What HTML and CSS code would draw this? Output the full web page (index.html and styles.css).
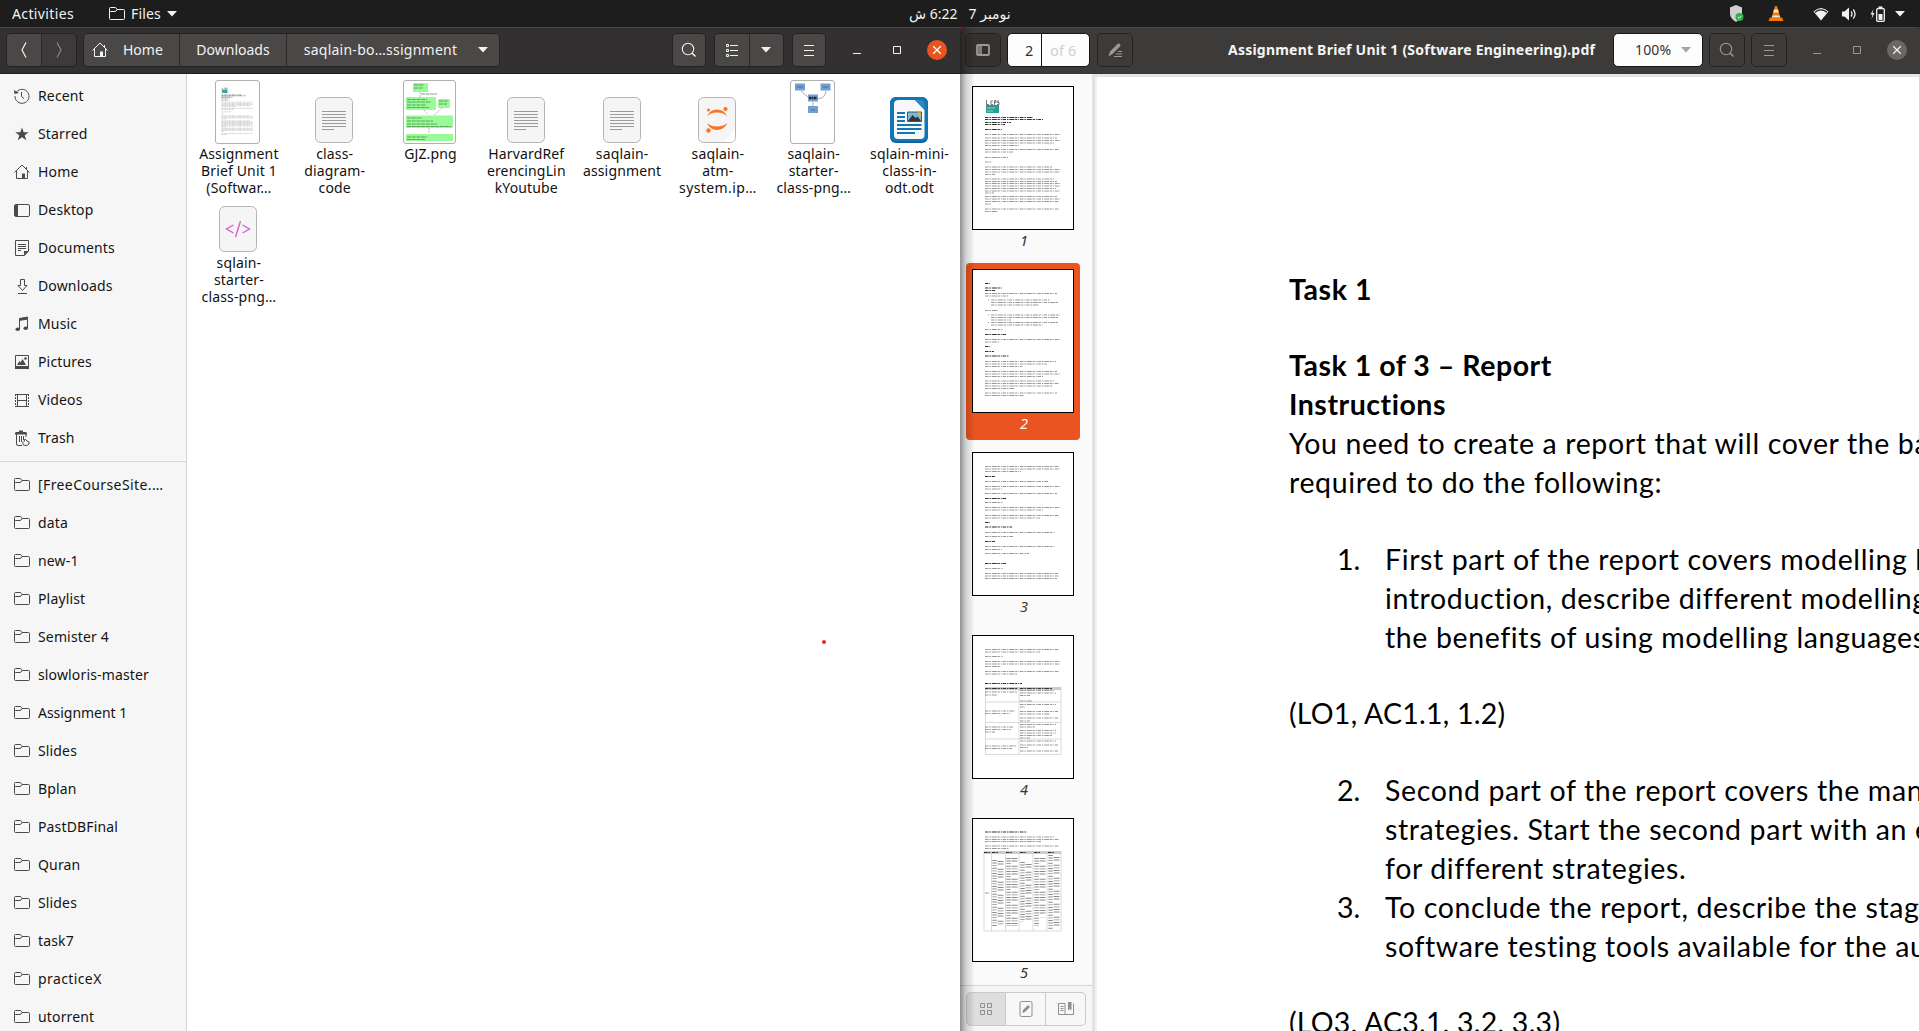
FILE: index.html
```html
<!DOCTYPE html>
<html lang="en">
<head>
<meta charset="utf-8">
<title>Files</title>
<link rel="stylesheet" href="styles.css">
</head>
<body>
<svg class="defs" width="0" height="0">
  <symbol id="i-folder" viewBox="0 0 16 16"><path d="M.5 12.5v-10q0-1 1-1h5l1.5 2h6.500q1 0 1 1v8q0 1-1 1h-13q-1 0-1-1zM.5 6.500q0-1 1-1H6q1.200 0 2-2" fill="none" stroke="currentColor"/></symbol>
  <symbol id="i-home" viewBox="0 0 16 16"><path d="M.5 8.500 8 1l7.500 7.500M2.500 7v7.500h11V7M12.500 3v2.500" fill="none" stroke="currentColor"/><path d="M8 9.500h3V15H8z" fill="currentColor"/></symbol>
  <symbol id="i-search" viewBox="0 0 16 16"><circle cx="7" cy="7" r="5.700" fill="none" stroke="currentColor" stroke-width="1.100"/><path d="m11 11 3.500 3.500" stroke="currentColor" stroke-width="1.500"/></symbol>
  <symbol id="i-menu" viewBox="0 0 16 16"><path d="M3 3.500h10M3 8.500h10M3 13.500h10" stroke="currentColor"/></symbol>
  <symbol id="i-down" viewBox="0 0 10 6"><path d="M0 0h10L5 5.500z" fill="currentColor"/></symbol>
  <symbol id="f-text" viewBox="0 0 38 46"><rect x=".5" y=".5" width="37" height="45" rx="5" fill="#f5f5f5" stroke="#b4b4b2"/><path d="M7 14.500h24M7 17.500h24M7 20.500h24M7 23.500h24M7 26.500h24M7 29.500h24M7 32.500h12" stroke="#9b9b9b"/></symbol>
  <symbol id="p-1" viewBox="0 0 102 144">
    <path d="M14.500 14v4.500h2.500M21 15h-2v3.500h2M22.500 19v-4.500h1.500v2h-1.500M27 15h-1.500v1.500H27v2h-2" stroke="#555" stroke-width=".8" fill="none"/><rect x="14" y="19" width="13" height="8" fill="#2a9d94"/><path d="M15 22h8M15 25h6" stroke="#8fd0ca"/>
    <path class="ink bold" d="M13 31.500h48M13 33.500h58M13 36.500h26M13 38.500h20M13 43.500h17"/>
    <path class="ink" d="M13 48.500h75M13 52h72M13 54.500h75M13 57h70M13 59.500h34M13 63.500h74M13 66h28M13 71.500h23M13 76h7M13 81h67M13 83.500h75M13 86h75M13 88.500h10M13 93h70M13 95.500h72M13 97.500h75M13 100h75M13 102.500h71M13 105h75M13 107h9M13 110.500h72M13 113h75M13 115.500h74M13 118h6M13 123h74M13 125.500h13"/>
  </symbol>
  <symbol id="p-2" viewBox="0 0 102 144">
    <path class="ink bold" d="M13 14.500h5M13 19h17M13 21.500h10M13 65.500h21M13 77.500h5M13 82.500h9M13 87h24"/>
    <path class="ink" d="M13 24.500h72M13 27h23M16 31h1M19 31h59M19 33.500h67M19 36h48M13 41.500h13M16 46h1M19 46h69M19 48.500h67M19 51h20M16 53.500h1M19 53.500h67M19 56h52M13 60.500h18M13 70.500h75M13 73h14M13 92.500h71M13 95h62M13 97.500h37M13 102.500h72M13 105h75M13 107.500h58M13 112h70M13 114.500h74M13 117h68M13 119.500h30M13 124h72M13 126.500h39"/>
  </symbol>
  <symbol id="p-3" viewBox="0 0 102 144">
    <path class="ink bold" d="M13 24.500h10M13 46.500h21M13 70.500h5M13 75h27M13 89.500h10M13 111.500h21"/>
    <path class="ink" d="M13 14.500h74M13 17h75M13 19.500h36M13 29.500h63M13 34.500h75M13 37h17M13 41.500h72M13 50.500h18M13 55.500h75M13 58h58M13 63.500h74M13 66h55M13 80.500h70M13 84.500h28M13 94.500h70M13 97.500h17M13 101.500h44M13 116.500h18M13 121.500h73M13 124h74M13 126.500h72"/>
  </symbol>
  <symbol id="p-4" viewBox="0 0 102 144">
    <path d="M13 52h76v3H13z" fill="#ccc"/>
    <path d="M13.500 52v67.500h75.500V52M47 52v67M13 67h76M13 87.500h76M13 104h76" fill="none" stroke="#ccc" stroke-width=".7"/>
    <path class="ink bold" d="M13 48.500h37M13 53.500h32M48 53.500h32"/>
    <path class="ink" d="M13 14.500h74M13 17h55M13 21.500h18M13 26.500h75M13 29h75M13 31.500h16M13 36.500h74M13 39h32M13 57h32M13 60h12M13 76h30M13 78.500h25M13 92h28M13 94.500h26M13 97h10M13 111h31M13 113.500h27M48 55.500h35M48 58h36M48 60.500h10M48 66h12M48 69.500h36M48 72h5M48 76.500h38M48 79h30M48 83h38M48 86h10M48 89.500h36M48 92h15M48 95.500h36M48 98h36M48 100.500h32M48 103h10M48 106h36M48 110h38M48 112.500h8M48 116h38"/>
  </symbol>
  <symbol id="p-5" viewBox="0 0 102 144">
    <path d="M12 33h77v3H12z" fill="#ccc"/>
    <path d="M12 33v80h77V33M19.500 33v80M33.500 33v80M47 33v80M61 33v80M75 33v80" fill="none" stroke="#ccc" stroke-width=".7"/>
    <path class="ink bold" d="M13 14h42M12 34.500h6M20 34.500h6M34 34.500h6M48 34.500h6M62 34.500h6M76 34.500h6"/>
    <path class="ink" d="M13 19h70M13 21.500h74M13 23.500h56M13 28h74M13 30.500h24M13 75h5"/>
    <path class="cell" d="M22.500 42v66M36.500 40v68M50.500 44v60M64.500 40v68M78.500 37v75"/>
    <path class="cell b" d="M28.500 43v64M42.500 40v68M56.500 46v56M70.500 40v60M84.500 39v72"/>
  </symbol>
</svg>

<header class="topbar">
  <span class="activities">Activities</span>
  <span class="appmenu"><svg width="16" height="16"><use href="#i-folder"/></svg>Files<svg class="tri" width="10" height="6"><use href="#i-down"/></svg></span>
  <span class="clock"><span dir="rtl">6:22 ش</span><span dir="rtl">نومبر 7</span></span>
  <span class="tray">
    <svg class="shield" width="16" height="18" viewBox="0 0 16 18"><path d="M8 0 14 2.500v6q0 5-6 8.500Q2 13.500 2 8.500v-6z" fill="#cfcfcf"/><circle cx="11.500" cy="12" r="4" fill="#2fae45"/><path d="m9.700 12 1.400 1.400 2.300-2.600" fill="none" stroke="#fff"/></svg>
    <svg class="cone" width="16" height="17" viewBox="0 0 16 17"><path d="M7 1h2l3.500 12h-9z" fill="#f57900"/><path d="M6 4.500h4l.8 3H5.200zM4.500 10.500h7l.5 2H4z" fill="#e8e8e8"/><path d="M2 12.500h12l1.500 3.500H.5z" fill="#f57900"/></svg>
    <svg class="wifi" width="16" height="14" viewBox="0 0 16 14"><path d="M.5 4.500Q8-2.500 15.500 4.500L8 13.500z" fill="#f2f2f2"/><path d="M2 5.200Q8 .5 14 5.200" fill="none" stroke="#1d1d1d" stroke-width="1.200"/></svg>
    <svg class="vol" width="16" height="14" viewBox="0 0 16 14"><path d="M1 4.500h2.500L8 .5v13L3.500 9.500H1z" fill="#f2f2f2"/><path d="M10 4.500q2 2.500 0 5M12.300 2.500q3.500 4.500 0 9" fill="none" stroke="#f2f2f2" stroke-width="1.300"/></svg>
    <svg class="bat" width="16" height="16" viewBox="0 0 16 16"><path d="M3.500 3 .5 8.500h2L1.500 13 4.500 7h-2z" fill="#f2f2f2"/><rect x="6.700" y="2.700" width="7.600" height="12.600" rx="1" fill="none" stroke="#f2f2f2" stroke-width="1.300"/><path d="M8.500.5h4v2h-4zM8.500 8h4v6h-4z" fill="#f2f2f2"/></svg>
    <svg class="tri" width="10" height="6"><use href="#i-down"/></svg>
  </span>
</header>

<main class="desktop">
<section class="files">
  <div class="bar">
    <div class="group nav"><span class="btn"><svg width="8" height="16" viewBox="0 0 8 16"><path d="M6 .5 2 8l4 7.500" fill="none" stroke="currentColor" stroke-width="1.200"/></svg></span><span class="btn off"><svg width="8" height="16" viewBox="0 0 8 16"><path d="m2 .5 4 7.500-4 7.500" fill="none" stroke="currentColor" stroke-width="1.200"/></svg></span></div>
    <div class="group path"><span class="btn home"><svg width="16" height="16"><use href="#i-home"/></svg>Home</span><span class="btn dl">Downloads</span><span class="btn cur">saqlain-bo…ssignment<svg width="10" height="6"><use href="#i-down"/></svg></span></div>
    <div class="group search"><span class="btn"><svg width="16" height="16"><use href="#i-search"/></svg></span></div>
    <div class="group view"><span class="btn"><svg width="16" height="16" viewBox="0 0 16 16"><path d="M6 3.500h8M6 8.500h8M6 13.500h8" stroke="currentColor"/><path d="M2.500 2.500h2v2h-2zM2.500 7.500h2v2h-2zM2.500 12.500h2v2h-2z" fill="none" stroke="currentColor"/></svg></span><span class="btn"><svg width="10" height="6"><use href="#i-down"/></svg></span></div>
    <div class="group menu"><span class="btn"><svg width="16" height="16"><use href="#i-menu"/></svg></span></div>
    <div class="wm"><svg width="8" height="9"><path d="M0 7.500h8" stroke="currentColor"/></svg><svg width="8" height="8"><path d="M.5.5h7v7h-7z" fill="none" stroke="currentColor"/></svg><span class="close"><svg width="8" height="8"><path d="m0 0 8 8M8 0 0 8" stroke="currentColor" stroke-width="1.300"/></svg></span></div>
  </div>
  <div class="body">
    <nav class="places">
      <ul>
        <li><svg width="16" height="16" viewBox="0 0 16 16"><path d="M2.500 4A7 7 0 1 1 1 8M7.500 4v4.500l2.500 2" fill="none" stroke="currentColor"/><path d="M0 2l.5 4 4.500-1z" fill="currentColor"/></svg>Recent</li>
        <li><svg width="16" height="16" viewBox="0 0 16 16"><path d="m8 1.500 1.700 4.700h5L10.700 9.200l1.500 5L8 11.300l-4.200 2.900 1.500-5-4-3h5z" fill="currentColor"/></svg>Starred</li>
        <li><svg width="16" height="16"><use href="#i-home"/></svg>Home</li>
        <li><svg width="16" height="16" viewBox="0 0 16 16"><rect x=".5" y="2.500" width="15" height="12" rx="1.500" fill="none" stroke="currentColor"/><path d="M1 3h3v11H1z" fill="currentColor"/></svg>Desktop</li>
        <li><svg width="16" height="16" viewBox="0 0 16 16"><path d="M1.500.5h13v10.500l-4 4.500h-9z" fill="none" stroke="currentColor"/><path d="M4 4.500h8M4 6.500h8M4 8.500h8M4 10.500h3" stroke="currentColor"/><path d="M10 11h4.500l-4.500 4.500z" fill="currentColor"/></svg>Documents</li>
        <li><svg width="16" height="16" viewBox="0 0 16 16"><path d="M6.500 1.500h4v6H13l-4.500 5-4.500-5h2.500zM4 15.500h9" fill="none" stroke="currentColor"/></svg>Downloads</li>
        <li><svg width="16" height="16" viewBox="0 0 16 16"><path d="M5.500 13V2.500L13.500 1v11" fill="none" stroke="currentColor"/><path d="M5 2.500 14 1v2.500L5 5z" fill="currentColor"/><ellipse cx="3.700" cy="13.300" rx="2.200" ry="1.800" fill="currentColor"/><ellipse cx="11.700" cy="12.300" rx="2.200" ry="1.800" fill="currentColor"/></svg>Music</li>
        <li><svg width="16" height="16" viewBox="0 0 16 16"><path d="M1.500 1.500h13v12h-13z" fill="none" stroke="currentColor"/><path d="M1 12h14v3H1zM3 11l2.500-4 1 1.500L8.500 5l3.500 6z" fill="currentColor"/><circle cx="11.500" cy="4.500" r="1.300" fill="currentColor"/></svg>Pictures</li>
        <li><svg width="16" height="16" viewBox="0 0 16 16"><path d="M1.500 2v13M14.500 2v13" stroke="currentColor" stroke-dasharray="2 1"/><path d="M3.500 2.500h9v12h-9zM3 8.500h10M1 2.500h14M1 14.500h14" fill="none" stroke="currentColor"/></svg>Videos</li>
        <li><svg width="16" height="16" viewBox="0 0 16 16"><path d="M1 3h12l-1-1H9V.5H5V2H2zM1 3h12v1.500H1z" fill="currentColor"/><path d="M2.500 4v10q0 1.500 1.500 1.500h4M12 4v3M5.500 6v6M7.500 6v6M9.500 6v4" fill="none" stroke="currentColor"/><path d="M9 14.500q-1-2 1-3l1-2.500 2 2q3 .5 2 3-1 1.500-3 1.500t-3-1z" fill="none" stroke="currentColor"/></svg>Trash</li>
      </ul>
      <ul class="marks">
        <li><svg width="16" height="16"><use href="#i-folder"/></svg><span class="wide">[FreeCourseSite.…</span></li>
        <li><svg width="16" height="16"><use href="#i-folder"/></svg>data</li>
        <li><svg width="16" height="16"><use href="#i-folder"/></svg>new-1</li>
        <li><svg width="16" height="16"><use href="#i-folder"/></svg>Playlist</li>
        <li><svg width="16" height="16"><use href="#i-folder"/></svg>Semister 4</li>
        <li><svg width="16" height="16"><use href="#i-folder"/></svg>slowloris-master</li>
        <li><svg width="16" height="16"><use href="#i-folder"/></svg><span class="tight">Assignment 1</span></li>
        <li><svg width="16" height="16"><use href="#i-folder"/></svg>Slides</li>
        <li><svg width="16" height="16"><use href="#i-folder"/></svg>Bplan</li>
        <li><svg width="16" height="16"><use href="#i-folder"/></svg>PastDBFinal</li>
        <li><svg width="16" height="16"><use href="#i-folder"/></svg>Quran</li>
        <li><svg width="16" height="16"><use href="#i-folder"/></svg>Slides</li>
        <li><svg width="16" height="16"><use href="#i-folder"/></svg>task7</li>
        <li><svg width="16" height="16"><use href="#i-folder"/></svg><span class="wide">practiceX</span></li>
        <li><svg width="16" height="16"><use href="#i-folder"/></svg>utorrent</li>
      </ul>
    </nav>
    <div class="grid">
      <figure><div class="pic"><svg class="thumb" width="43" height="62"><use href="#p-1"/></svg></div><figcaption>Assignment<br>Brief Unit 1<br>(Softwar…</figcaption></figure>
      <figure><div class="pic doc"><svg width="38" height="46"><use href="#f-text"/></svg></div><figcaption>class-<br>diagram-<br>code</figcaption></figure>
      <figure><div class="pic"><svg class="thumb" width="51" height="62" viewBox="0 0 51 62"><g fill="#98fb98"><path d="M9 2h15v9H9zM2 16h30v13H2zM34 18h12v9H34zM2 34.500h47V47H2zM2 53h47v7H2z"/></g><path d="M10 4h10M10 7h9M3 18.500h20M3 21h24M3 24h19M3 26.500h22M35 20h9M35 23h8M3 37h15M3 40h26M3 43h30M3 45.500h44M3 56h20M3 58.500h18M17 13h16" stroke="#4d8a4d" stroke-width=".8" stroke-dasharray="4 .7"/><path d="M16 11v5M20 29l4 5M38 27l-8 7M25 47v6" fill="none" stroke="#999" stroke-width=".7" stroke-dasharray="2 1"/></svg></div><figcaption>GJZ.png</figcaption></figure>
      <figure><div class="pic doc"><svg width="38" height="46"><use href="#f-text"/></svg></div><figcaption>HarvardRef<br>erencingLin<br>kYoutube</figcaption></figure>
      <figure><div class="pic doc"><svg width="38" height="46"><use href="#f-text"/></svg></div><figcaption>saqlain-<br>assignment</figcaption></figure>
      <figure><div class="pic doc"><svg width="38" height="46" viewBox="0 0 38 46"><rect x=".5" y=".5" width="37" height="45" rx="5" fill="#f5f5f5" stroke="#b4b4b2"/><path d="M26 45 37 33v7q0 5-5 5z" fill="#fff"/><g fill="#f37726"><path d="M9 19.500q3-7 10-7t10.500 7q-4-4-10.500-4t-10 4zM9 26q4 3.500 10 3.500T29.500 26q-3.500 7-10.500 7T9 26z"/><circle cx="10.500" cy="13" r="1.500"/><circle cx="27.500" cy="12" r="2.100"/><circle cx="10.500" cy="33.500" r="2.200"/></g></svg></div><figcaption>saqlain-<br>atm-<br><span class="wide">system.ip…</span></figcaption></figure>
      <figure><div class="pic"><svg class="thumb" width="43" height="62" viewBox="0 0 43 62"><path d="M4 2.500h10v7H4zM29.500 2.500h10v7h-10zM17 13.500h10v7H17zM17 25h10v7H17z" fill="#729fcf"/><path d="M6 6h6M31.500 6h6M20 29h4" stroke="#4b6e96"/><path d="M18 17h8" stroke="#1d2b3c" stroke-width="2.500" stroke-dasharray="2 .5"/><path d="m10 10 7 6M35 10q-1 8-8 7.500M22 21v4" fill="none" stroke="#777" stroke-width=".6"/></svg></div><figcaption>saqlain-<br>starter-<br>class-png…</figcaption></figure>
      <figure><div class="pic doc"><svg width="38" height="46" viewBox="0 0 38 46"><rect width="38" height="46" rx="6" fill="#0c5f98"/><rect width="38" height="44.500" rx="6" fill="#1278b5"/><path d="M9 3h16l9.500 10v25q0 4-4 4H8q-4 0-4-4V7q0-4 5-4z" fill="#f8f8f8"/><path d="M25 3h7q3 1 3 10z" fill="#2b8ac4"/><path d="M7 16h8M7 20h8M7 24h8M7 28h24.500M7 32h24.500M7 36h18" stroke="#1278b5" stroke-width="1.800"/><path d="M17.500 15h14v9.500h-14z" fill="#7ab8e0" stroke="#333" stroke-width=".8"/><path d="m18 24 4.500-6 3 3 2-1.500 3.500 4.500z" fill="#333"/><path d="M27 15.500h4v4z" fill="#fcb900"/></svg></div><figcaption>sqlain-mini-<br>class-in-<br>odt.odt</figcaption></figure>
      <figure><div class="pic doc"><svg width="38" height="46" viewBox="0 0 38 46"><rect x=".5" y=".5" width="37" height="45" rx="5" fill="#f5f5f5" stroke="#b4b4b2"/><path d="m14.500 19-7 4 7 4M23.500 19l7 4-7 4M21.500 15l-5 16" fill="none" stroke="#d961cf" stroke-width="1.400"/></svg></div><figcaption>sqlain-<br>starter-<br>class-png…</figcaption></figure>
      <i class="dot"></i>
    </div>
  </div>
</section>

<section class="viewer">
  <div class="bar">
    <div class="group side"><span class="btn"><svg width="16" height="16" viewBox="0 0 16 16"><rect x="2" y="3" width="12" height="10" rx="1" fill="none" stroke="currentColor" stroke-width="1.800"/><path d="M6 3v10" stroke="currentColor" stroke-width="1.500"/><path d="M3 4h2v8H3z" fill="#7a7876"/></svg></span></div>
    <div class="group pageno"><span class="num">2</span><span class="total">of 6</span></div>
    <div class="group pen"><span class="btn"><svg width="16" height="16" viewBox="0 0 16 16"><path d="M1.500 14.500 3 9.500 10.500 2q1.500-1 2.500 0t0 2.500L5.500 12z" fill="currentColor"/><path d="M11 9.500h4M9 12h6M7 14.500h8" stroke="currentColor"/></svg></span></div>
    <h1>Assignment Brief Unit 1 (Software Engineering).pdf</h1>
    <div class="group zoom">100%<svg width="10" height="6"><use href="#i-down"/></svg></div>
    <div class="group find"><span class="btn"><svg width="16" height="16"><use href="#i-search"/></svg></span></div>
    <div class="group opts"><span class="btn"><svg width="16" height="16"><use href="#i-menu"/></svg></span></div>
    <div class="wm"><svg width="8" height="9"><path d="M0 7.500h8" stroke="currentColor"/></svg><svg width="8" height="8"><path d="M.5.5h7v7h-7z" fill="none" stroke="currentColor"/></svg><span class="close"><svg width="8" height="8"><path d="m0 0 8 8M8 0 0 8" stroke="currentColor" stroke-width="1.300"/></svg></span></div>
  </div>
  <div class="body">
    <aside>
      <div class="pages">
        <div class="page"><svg width="102" height="144"><use href="#p-1"/></svg><em>1</em></div>
        <div class="page on"><svg width="102" height="144"><use href="#p-2"/></svg><em>2</em></div>
        <div class="page"><svg width="102" height="144"><use href="#p-3"/></svg><em>3</em></div>
        <div class="page"><svg width="102" height="144"><use href="#p-4"/></svg><em>4</em></div>
        <div class="page"><svg width="102" height="144"><use href="#p-5"/></svg><em>5</em></div>
      </div>
      <div class="tabs">
        <span class="on"><svg width="16" height="16" viewBox="0 0 16 16"><path d="M2.500 2.500h4v4h-4zM9.500 2.500h4v4h-4zM2.500 9.500h4v4h-4zM9.500 9.500h4v4h-4z" fill="none" stroke="currentColor"/></svg></span>
        <span><svg width="16" height="16" viewBox="0 0 16 16"><rect x="2" y=".5" width="12" height="15" rx="1.500" fill="none" stroke="currentColor"/><path d="m4.500 12 .5-3 5-5 2 2-5 5z" fill="currentColor"/></svg></span>
        <span><svg width="16" height="16" viewBox="0 0 16 16"><path d="M.5 2.500h6.500v11H.5zM15.500 2.500v11H7" fill="none" stroke="currentColor"/><path d="M2.500 5.500h3M2.500 7.500h3M2.500 9.500h3" stroke="currentColor"/><path d="M10 1h3.500v8.500l-1.700-1.500L10 9.500z" fill="currentColor"/></svg></span>
      </div>
    </aside>
    <article class="sheet">
      <p class="b t">Task 1</p>
      <p class="gap"></p>
      <p class="b">Task 1 of 3 – Report</p>
      <p class="b">Instructions</p>
      <p>You need to create a report that will cover the ba</p>
      <p>required to do the following:</p>
      <p class="gap"></p>
      <p class="li"><span>1.</span>First part of the report covers modelling l</p>
      <p class="li"><span></span>introduction, describe different modelling</p>
      <p class="li"><span></span>the benefits of using modelling languages</p>
      <p class="gap"></p>
      <p class="lo">(LO1, AC1.1, 1.2)</p>
      <p class="gap"></p>
      <p class="li"><span>2.</span>Second part of the report covers the man</p>
      <p class="li"><span></span>strategies. Start the second part with an e</p>
      <p class="li"><span></span>for different strategies.</p>
      <p class="li"><span>3.</span>To conclude the report, describe the stag</p>
      <p class="li"><span></span>software testing tools available for the au</p>
      <p class="gap"></p>
      <p class="lo">(LO3, AC3.1, 3.2, 3.3)</p>
    </article>
  </div>
</section>
</main>
</body>
</html>
```
FILE: styles.css
```css
* { box-sizing: border-box; margin: 0; padding: 0; }
html, body { height: 1031px; overflow: hidden; }
body {
  display: flex;
  flex-direction: column;
  background: #1d1d1d;
  color: #111;
  font: 14px/18px "Noto Sans", "DejaVu Sans", sans-serif;
  letter-spacing: .15px;
}
svg { display: block; flex: none; }
.defs { position: absolute; }

/* top panel */
.topbar {
  position: relative;
  flex: none;
  display: flex;
  align-items: center;
  height: 27px;
  padding-left: 12px;
  background: #1d1d1d;
  color: #f2f2f2;
}
.activities { width: 97px; letter-spacing: .37px; }
.appmenu { display: flex; align-items: center; gap: 6px; }
.clock {
  position: absolute;
  left: 909px;
  display: flex;
  gap: 11px;
  top: 5px;
}
.tray { display: flex; align-items: center; margin-left: auto; padding-right: 15px; }
.shield { margin-right: 24px; }
.cone { margin-right: 29px; }
.wifi { margin-right: 12px; }
.vol { margin-right: 13px; }
.bat { margin-right: 9px; }

/* windows */
.desktop { flex: 1; display: flex; min-height: 0; background: #8c1620; }
.files { width: 960px; flex: none; display: flex; flex-direction: column; }
.viewer {
  position: relative;
  flex: 1;
  min-width: 0;
  display: flex;
  flex-direction: column;
  border-radius: 5px 5px 0 0;
  overflow: hidden;
}
.viewer::before {
  content: "";
  position: absolute;
  inset: 0 auto 0 0;
  width: 15px;
  background: linear-gradient(90deg, rgba(0,0,0,.42), rgba(0,0,0,.16) 40%, transparent);
  z-index: 2;
}
.bar {
  flex: none;
  display: flex;
  align-items: center;
  height: 47px;
  padding: 0 0 1px 6px;
  background: #333031;
  border-top: 1px solid #464444;
  border-bottom: 1px solid #1c1b1b;
  color: #f2f2f2;
}
.viewer .bar { background: #3d3b39; color: #9b9996; padding-left: 5px; border-color: #4a4846 transparent #3a3836; }
.group {
  flex: none;
  display: flex;
  height: 34px;
  border: 1px solid #232121;
  border-radius: 5px;
  overflow: hidden;
}
.btn {
  flex: 1;
  display: flex;
  align-items: center;
  justify-content: center;
  background: #4a4846;
}
.btn + .btn { border-left: 1px solid #2b2929; }
.btn.off { background: #3c3a3a; color: #8a8886; }
.viewer .btn { background: #3d3b39; }
.viewer .side .btn { background: #343230; }
.nav { width: 71px; margin-right: 6px; }
.path { width: 417px; }
.path .btn { flex: none; }
.path .home { width: 95px; gap: 15px; justify-content: flex-start; padding-left: 8px; letter-spacing: 0; }
.path .dl { width: 107px; letter-spacing: 0; }
.path .cur { flex: 1; gap: 21px; letter-spacing: .25px; padding-left: 6px; }
.search { width: 34px; margin-left: 172px; }
.view { width: 66px; margin-left: 6px; }
.search { width: 34px; margin-left: 173px; }
.view { width: 67px; margin-left: 7px; }
.view { width: 66px; }
.menu { width: 34px; margin-left: 7px; }
.files .view { width: 66px; }
.wm { display: flex; align-items: center; }
.wm svg + svg { margin-left: 32px; }
.close {
  display: grid;
  place-items: center;
  width: 20px;
  height: 20px;
  margin-left: 26px;
  border-radius: 50%;
  background: #e95420;
  color: #fff;
}
.files .search { width: 34px; margin-left: 172px; }
.files .view { width: 70px; margin-left: 8px; }
.files .menu { width: 34px; margin-left: 8px; }
.files .wm { margin-left: 27px; }
.viewer .close { background: #6a6866; color: #eee; }
.side { width: 36px; }
.pageno { width: 83px; margin-left: 6px; background: #fdfdfd; border-color: #161616; }
.pageno span { line-height: 32px; font-size: 14.5px; }
.num { width: 34px; color: #333; padding-left: 17px; border-right: 1px solid #161616; }
.total { color: #cfcfcf; padding-left: 8px; }
.pen { width: 36px; margin-left: 7px; }
h1 { flex: none; margin-left: 95px; width: 385px; color: #f5f5f5; font-size: 14px; line-height: 18px; letter-spacing: .22px; white-space: nowrap; }
.zoom { width: 90px; align-items: center; padding-left: 21px; gap: 10px; background: #fdfdfd; color: #333; border-color: #161616; }
.zoom svg { color: #a5a5a5; }
.find { width: 36px; margin-left: 6px; }
.opts { width: 36px; margin-left: 6px; }
.viewer .wm { margin-left: 26px; }
.body { flex: 1; display: flex; min-height: 0; }

/* places sidebar */
.places { width: 187px; padding-top: 3px; background: #f6f6f6; border-right: 1px solid #d4d4d4; overflow: hidden; flex: none; }
.places ul { list-style: none; }
.places li { display: flex; align-items: center; gap: 8px; height: 38px; padding-left: 14px; color: #141414; white-space: nowrap; }
.places li svg { color: #4a4a4a; }
.marks { margin-top: 4px; padding-top: 4px; border-top: 1px solid #d8d8d8; }
.wide { letter-spacing: .4px; }
.tight { letter-spacing: -.03px; }

/* icon grid */
.grid {
  position: relative;
  flex: 1;
  display: grid;
  grid-template-columns: repeat(8, 95.8px);
  grid-auto-rows: 109px;
  align-content: start;
  padding: 6px 0 0 4px;
  background: #fff;
  overflow: hidden;
}
.pic { display: flex; align-items: flex-end; justify-content: center; height: 64px; padding-right: 2px; }
.pic.doc { padding: 0 1px 1px 0; }
.thumb { box-sizing: content-box; border: 1px solid #b0b0ac; border-radius: 3px; background: #fff; }
figcaption { padding-top: 1px; text-align: center; line-height: 17px; color: #111; white-space: nowrap; }
.dot { position: absolute; left: 635px; top: 566px; width: 4px; height: 4px; border-radius: 50%; background: #ef2929; }

/* page thumbnails */
aside { width: 135px; flex: none; display: flex; flex-direction: column; background: #fafafa; border-right: 3px solid #e2e2e2; }
.pages { flex: 1; padding: 6px 0 0 6px; min-height: 0; overflow: hidden; }
.page { width: 114px; height: 177px; margin-bottom: 6px; padding-top: 6px; border-radius: 4px; color: #333; }
.page svg { margin: 0 auto; background: #fff; outline: 1px solid #000; outline-offset: -1px; }
.page em { display: block; padding: 1px 0 0 2px; text-align: center; font-size: 14.5px; }
.page.on { background: #e95420; color: #fff; }
.ink { fill: none; stroke: #8c8c8c; stroke-width: .9; stroke-dasharray: 3.500 .9 1.500 .9 5 .8 2.200 1 .9 .8; }
.ink.bold { stroke: #333; stroke-width: 1.100; }
.cell { fill: none; stroke: #8a8a8a; stroke-width: 4.500; stroke-dasharray: .9 1.700; }
.cell.b { stroke-width: 6; stroke-dasharray: .9 1.700 .9 4.300 .9 1.700 .9 1.700; }
.tabs { display: flex; height: 46px; flex: none; padding: 6px 0 0 6px; border-top: 1px solid #d5d5d5; background: #f6f6f6; color: #8f8f8f; }
.tabs span { display: grid; place-items: center; width: 40px; height: 34px; border: 1px solid #c9c9c9; border-left-width: 0; background: #f7f7f7; }
.tabs span:first-child { border-left-width: 1px; border-radius: 5px 0 0 5px; background: #dedede; }
.tabs span:last-child { border-radius: 0 5px 5px 0; }

/* document page */
.sheet {
  flex: 1;
  min-width: 0;
  overflow: hidden;
  padding: 193px 0 0 194px;
  background: #fff;
  border-top: 3px solid #e4e4e4;
  border-right: 1px solid #d8d8d8;
  box-shadow: inset 2px 0 0 #f0f0f0;
  color: #000;
  font-family: Lato, "Open Sans", sans-serif;
  font-size: 28.5px;
  letter-spacing: .62px;
}
.sheet p { height: 39px; line-height: 39px; white-space: nowrap; }
.sheet .gap { height: 37.4px; }
.sheet .b { font-weight: 700; letter-spacing: .52px; }
.sheet .b.t { letter-spacing: .6px; }
.sheet .lo { letter-spacing: .25px; }
.sheet .li { padding-left: 48px; }
.li span { display: inline-block; width: 48px; letter-spacing: 0; }
```
